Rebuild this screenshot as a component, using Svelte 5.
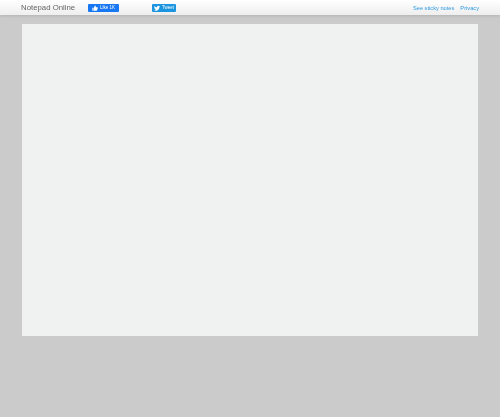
<script>
	const links = ['See sticky notes', 'Privacy'];
</script>

<div class="page">
	<header class="navbar">
		<span class="brand">Notepad Online</span>
		<span class="btn like">
			<svg viewBox="0 0 16 16" width="6" height="6"><path fill="#fff" d="M1 7h3v8H1zM5 7l3-6c1.500 0 2 1 2 2v3h4.500c1 0 1.500 1 1 2l-2 6c-.2.600-.8 1-1.500 1H5z" /></svg>
			Like 1K
		</span>
		<span class="btn tweet">
			<svg viewBox="0 0 16 16" width="6" height="6"><path fill="#fff" d="M16 3.500c-.6.300-1.200.4-1.900.5.700-.4 1.200-1 1.400-1.800-.6.400-1.300.6-2.100.8A3.300 3.300 0 0 0 7.800 6C5.100 5.900 2.700 4.600 1.100 2.600c-.9 1.500-.4 3.400 1 4.400-.5 0-1-.2-1.500-.4 0 1.600 1.100 3 2.600 3.300-.5.100-1 .1-1.500 0 .4 1.300 1.600 2.200 3.100 2.300A6.600 6.600 0 0 1 0 13.500 9.300 9.300 0 0 0 14.400 5.200c.6-.4 1.200-1 1.600-1.700z" /></svg>
			Tweet
		</span>
		<nav class="links">
			{#each links as link}
				<span>{link}</span>
			{/each}
		</nav>
	</header>
	<main class="content">
		<div class="sheet"></div>
	</main>
</div>

<style>
	:global(body) {
		background: #cbcbcb;
		overflow: hidden;
	}
	.page {
		height: 417px;
		background: #cbcbcb;
		font-family: 'Liberation Sans', Arial, sans-serif;
		filter: blur(0.7px);
	}
	.navbar {
		height: 15px;
		display: flex;
		align-items: center;
		padding: 0 21px;
		background: linear-gradient(#ffffff, #eeeeee);
		box-shadow: 0 1px 3px rgba(0, 0, 0, 0.12);
	}
	.brand {
		width: 67px;
		font-size: 7.8px;
		color: #666;
		white-space: nowrap;
	}
	.btn {
		height: 8px;
		display: flex;
		align-items: center;
		justify-content: center;
		gap: 2px;
		box-sizing: border-box;
		border-radius: 1px;
		font-size: 4.5px;
		color: #fff;
		white-space: nowrap;
	}
	.like {
		width: 31px;
		background: #1877f2;
	}
	.tweet {
		width: 24px;
		margin-left: 33px;
		background: #1b95e0;
	}
	.links {
		margin-left: auto;
		display: flex;
		gap: 6px;
		font-size: 5.7px;
		color: #2f9ae0;
		white-space: nowrap;
	}
	.content {
		padding: 9px 22px 0;
	}
	.sheet {
		height: 312px;
		background: #eff2f1;
	}
</style>
